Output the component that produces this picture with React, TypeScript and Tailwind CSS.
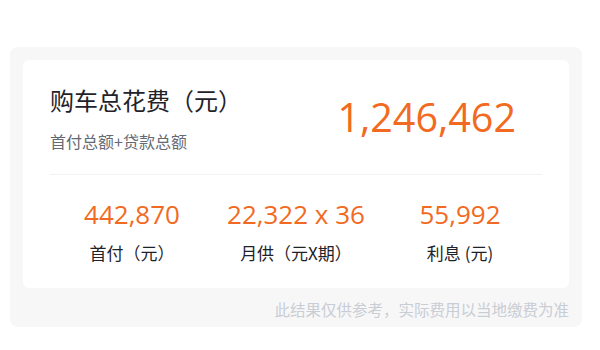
import React from "react";

const cjk = { fontFamily: '"Noto Sans CJK SC", sans-serif' };
const num = { fontFamily: '"Open Sans", "Noto Sans CJK SC", sans-serif' };

function Stat({ value, label }: { value: string; label: string }) {
  return (
    <div className="flex flex-1 flex-col items-center">
      <div className="text-[26px] leading-[36px] text-[#f26a21]" style={num}>
        {value}
      </div>
      <div className="mt-[9px] text-[17px] leading-[24px] text-[#1f2329]" style={cjk}>
        {label}
      </div>
    </div>
  );
}

export default function App() {
  return (
    <div className="min-h-[350px] w-[600px] bg-white pl-[10px] pt-[47px]">
      <div className="w-[572px] rounded-[8px] bg-[#f7f7f8] px-[13px] pt-[13px] pb-[8px]">
        <div className="rounded-[6px] bg-white px-[27px] pt-[24px] pb-[23px]">
          <div className="flex items-center justify-between border-b border-[#f2f2f2] pb-[23px]">
            <div className="flex flex-col">
              <div className="text-[24px] leading-[32px] text-[#1f2329]" style={cjk}>
                购车总花费（元）
              </div>
              <div className="mt-[15px] text-[16px] leading-[20px] text-[#646a73]" style={cjk}>
                首付总额+贷款总额
              </div>
            </div>
            <div
              className="mb-[2px] pr-[26px] text-[39.5px] leading-[52px] text-[#f26a21]"
              style={num}
            >
              1,246,462
            </div>
          </div>
          <div className="flex pt-[21px]">
            <Stat value="442,870" label="首付（元）" />
            <Stat value="22,322 x 36" label="月供（元X期）" />
            <Stat value="55,992" label="利息 (元)" />
          </div>
        </div>
        <div
          className="mt-[11px] text-right text-[15.5px] leading-[20px] text-[#c9cdd4]"
          style={cjk}
        >
          此结果仅供参考，实际费用以当地缴费为准
        </div>
      </div>
    </div>
  );
}
